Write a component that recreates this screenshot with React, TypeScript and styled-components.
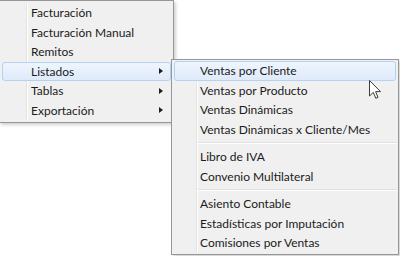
import { Fragment } from "react";
import styled, { createGlobalStyle } from "styled-components";

const GlobalStyle = createGlobalStyle`
  body {
    margin: 0;
    background: #ffffff;
    font-family: Lato, "Noto Sans", "Liberation Sans", sans-serif;
  }
`;

const Stage = styled.div`
  position: relative;
  width: 400px;
  height: 256px;
  overflow: hidden;
  background: #ffffff;
`;

const Menu = styled.ul<{ $width: number; $gutter: number }>`
  position: relative;
  display: flex;
  flex-direction: column;
  list-style: none;
  margin: 0;
  padding: 2px 0;
  width: ${(p) => p.$width}px;
  background: #f0f0f0;
  border: 1px solid #979797;
  box-shadow: 2px 2px 3px rgba(0, 0, 0, 0.18);
  box-sizing: border-box;

  &::before {
    content: "";
    position: absolute;
    top: 2px;
    bottom: 2px;
    left: ${(p) => p.$gutter}px;
    width: 1px;
    background: #e2e3e3;
    box-shadow: 1px 0 0 #ffffff;
  }
`;

const MainMenu = styled(Menu)`
  margin-left: -1px;
`;

// the flyout lies over the main menu, so it is placed on top of it
const SubMenu = styled(Menu)`
  position: absolute;
  left: 171px;
  top: 59px;
  padding: 1px 0;
`;

const Item = styled.li<{ $active?: boolean; $indent: number }>`
  position: relative;
  display: flex;
  align-items: center;
  height: 19.5px;
  margin: 0 2px;
  padding-left: ${(p) => p.$indent}px;
  font-size: 12px;
  color: #1b1b1b;
  white-space: nowrap;
  border: 1px solid ${(p) => (p.$active ? "#b3d1f3" : "transparent")};
  border-radius: 3px;
  background: ${(p) =>
    p.$active ? "linear-gradient(#eef5fd, #dfeafa)" : "transparent"};
  box-sizing: border-box;
  z-index: 1;
`;

const Arrow = styled.span`
  margin-left: auto;
  margin-right: 7px;
  width: 0;
  height: 0;
  border-top: 3.5px solid transparent;
  border-bottom: 3.5px solid transparent;
  border-left: 4px solid #1e1e1e;
`;

const Separator = styled.li<{ $gutter: number }>`
  position: relative;
  height: 8px;
  margin-left: ${(p) => p.$gutter + 2}px;
  margin-right: 1px;
  z-index: 1;

  &::after {
    content: "";
    position: absolute;
    left: 0;
    right: 0;
    top: 3px;
    height: 1px;
    background: #e0e0e0;
    box-shadow: 0 1px 0 #ffffff;
  }
`;

const Cursor = styled.svg`
  position: absolute;
  left: 369px;
  top: 80px;
  z-index: 5;
`;

const mainItems = [
  { label: "Facturación" },
  { label: "Facturación Manual" },
  { label: "Remitos" },
  { label: "Listados", sub: true, active: true },
  { label: "Tablas", sub: true },
  { label: "Exportación", sub: true },
];

const subGroups = [
  [
    "Ventas por Cliente",
    "Ventas por Producto",
    "Ventas Dinámicas",
    "Ventas Dinámicas x Cliente/Mes",
  ],
  ["Libro de IVA", "Convenio Multilateral"],
  ["Asiento Contable", "Estadísticas por Imputación", "Comisiones por Ventas"],
];

export default function App() {
  return (
    <Stage>
      <GlobalStyle />
      <MainMenu $width={175} $gutter={26}>
        {mainItems.map((item) => (
          <Item key={item.label} $active={item.active} $indent={28}>
            {item.label}
            {item.sub && <Arrow />}
          </Item>
        ))}
      </MainMenu>
      <SubMenu $width={228} $gutter={24}>
        {subGroups.map((group, gi) => (
          <Fragment key={gi}>
            {gi > 0 && <Separator $gutter={24} />}
            {group.map((label) => (
              <Item
                key={label}
                $active={label === "Ventas por Cliente"}
                $indent={25}
              >
                {label}
              </Item>
            ))}
          </Fragment>
        ))}
      </SubMenu>
      <Cursor width="13" height="20" viewBox="0 0 13 20">
        <path
          d="M0.5 0.5 L0.5 16 L4.3 12.4 L6.8 18.3 L9 17.4 L6.6 11.6 L11.5 11.6 Z"
          fill="#ffffff"
          stroke="#3a3a3a"
          strokeWidth="1"
          strokeLinejoin="round"
        />
      </Cursor>
    </Stage>
  );
}
